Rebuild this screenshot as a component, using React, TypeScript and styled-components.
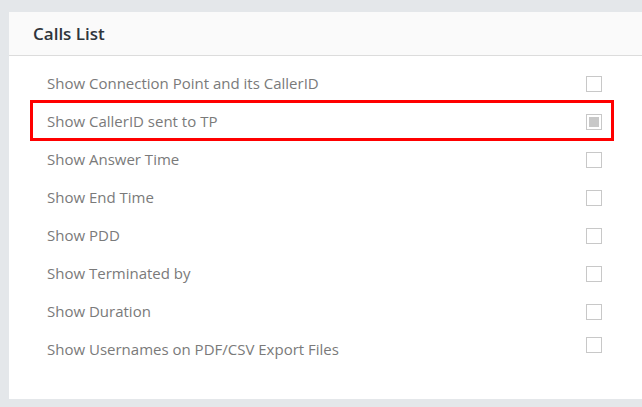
import styled, { createGlobalStyle } from "styled-components";

const GlobalStyle = createGlobalStyle`
  html, body {
    margin: 0;
    padding: 0;
    background: #e4e7ea;
    overflow: hidden;
  }
  body {
    font-family: "Open Sans", "Liberation Sans", sans-serif;
  }
`;

const options = [
  { label: "Show Connection Point and its CallerID", checked: false },
  { label: "Show CallerID sent to TP", checked: true, marked: true },
  { label: "Show Answer Time", checked: false },
  { label: "Show End Time", checked: false },
  { label: "Show PDD", checked: false },
  { label: "Show Terminated by", checked: false },
  { label: "Show Duration", checked: false },
  { label: "Show Usernames on PDF/CSV Export Files", checked: false, raised: true },
];

const App = () => {
  return (
    <Page>
      <GlobalStyle />
      <Panel>
        <Header>
          <Title>Calls List</Title>
        </Header>
        <List>
          {options.map((option) => (
            <Row key={option.label} $marked={option.marked}>
              <Label>{option.label}</Label>
              <Checkbox $checked={option.checked} $raised={option.raised} />
            </Row>
          ))}
        </List>
      </Panel>
    </Page>
  );
};

const Page = styled.div`
  padding: 12px 0 0 9px;
  height: 407px;
  box-sizing: border-box;
`;

const Panel = styled.div`
  width: 660px;
  background: #ffffff;
`;

const Header = styled.div`
  height: 43px;
  display: flex;
  align-items: center;
  padding-left: 24px;
  background: #fafafa;
  border-bottom: 1px solid #dcdcdc;
`;

const Title = styled.h2`
  margin: 0;
  font-size: 17px;
  font-weight: 600;
  color: #2f353b;
`;

const List = styled.div`
  padding: 8px 0 31px 21px;
  width: 584px;
`;

const Row = styled.div<{ $marked?: boolean }>`
  position: relative;
  height: 38px;
  display: flex;
  align-items: center;
  justify-content: space-between;
  padding: 0 12px 0 17px;

  ${({ $marked }) =>
    $marked &&
    `
    &::after {
      content: "";
      position: absolute;
      left: 0;
      right: 0;
      top: -2px;
      bottom: -1px;
      border: 3px solid #ff0000;
      pointer-events: none;
    }
  `}
`;

const Label = styled.span`
  font-size: 15px;
  color: #7a7a7a;
`;

const Checkbox = styled.span<{ $checked?: boolean; $raised?: boolean }>`
  position: relative;
  width: 16px;
  height: 16px;
  box-sizing: border-box;
  border: 1px solid #c8c8c8;
  background: #ffffff;
  margin-top: ${({ $raised }) => ($raised ? "-8px" : "1px")};

  ${({ $checked }) =>
    $checked &&
    `
    &::before {
      content: "";
      position: absolute;
      inset: 2px;
      background: #c8c8c8;
    }
  `}
`;

export default App;
